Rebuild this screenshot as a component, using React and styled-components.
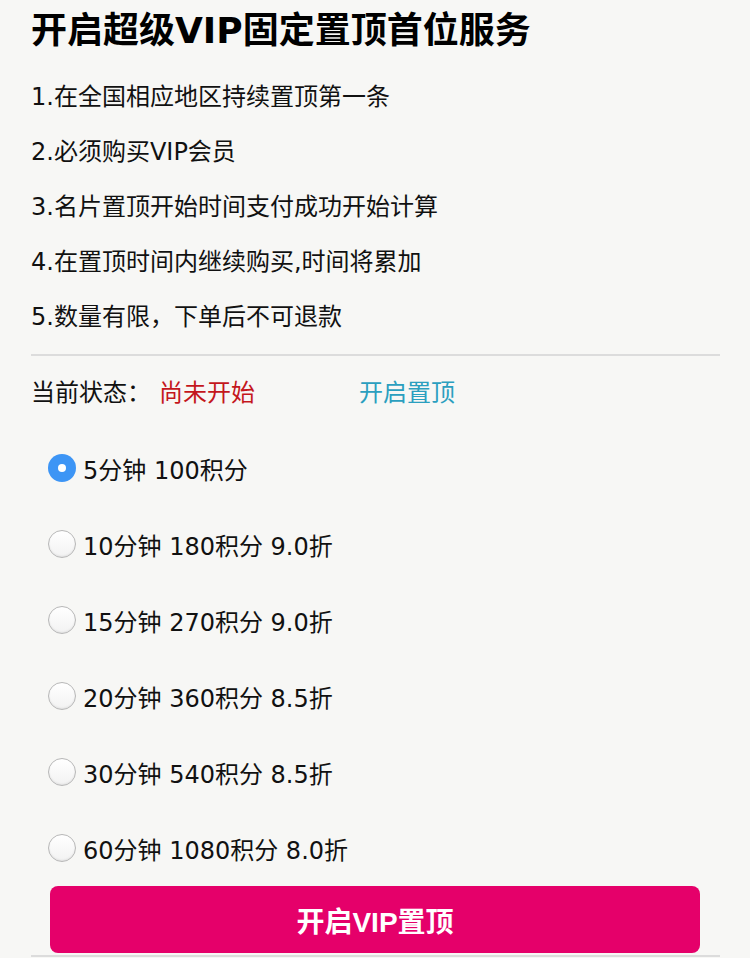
import React, { useState } from "react";
import styled, { createGlobalStyle } from "styled-components";

const GlobalStyle = createGlobalStyle`
  body {
    margin: 0;
    background: #f7f7f5;
    font-family: "DejaVu Sans", "Noto Sans CJK SC", sans-serif;
    color: #111;
  }
`;

const Page = styled.div`
  width: 750px;
  padding: 0 30px 0 31px;
  box-sizing: border-box;
`;

const Title = styled.h1`
  margin: 0;
  font-size: 36px;
  line-height: 62px;
  font-weight: bold;
  color: #000;
  white-space: nowrap;
`;

const Rules = styled.div`
  padding-top: 5px;
`;

const Rule = styled.div`
  height: 55px;
  display: flex;
  align-items: center;
  font-size: 24px;
`;

const Divider = styled.div`
  height: 2px;
  background: #dcdcdc;
  margin-top: 12px;
`;

const StatusRow = styled.div`
  height: 68px;
  display: flex;
  align-items: center;
  font-size: 24px;
`;

const Label = styled.span`
  width: 128px;
`;

const State = styled.span`
  width: 200px;
  color: #c4161c;
`;

const Action = styled.span`
  color: #2b9fbf;
  cursor: pointer;
`;

const Options = styled.div`
  padding-top: 6px;
`;

const Option = styled.label`
  height: 76px;
  display: flex;
  align-items: center;
  padding-left: 17px;
  font-size: 24px;
  cursor: pointer;
`;

const Radio = styled.span`
  width: 28px;
  height: 28px;
  border-radius: 50%;
  box-sizing: border-box;
  margin-right: 7px;
  display: flex;
  align-items: center;
  justify-content: center;
  background: ${(p) => (p.checked ? "#3d95f5" : "linear-gradient(#fff, #f2f2f2)")};
  border: ${(p) => (p.checked ? "none" : "1px solid #b8b8b8")};
  box-shadow: ${(p) => (p.checked ? "none" : "inset 0 -1px 2px rgba(0,0,0,0.08)")};

  &::after {
    content: "";
    display: ${(p) => (p.checked ? "block" : "none")};
    width: 8px;
    height: 8px;
    border-radius: 50%;
    background: #fff;
  }
`;

const Footer = styled.div`
  border-bottom: 2px solid #dcdcdc;
  padding-bottom: 2px;
`;

const Button = styled.button`
  display: block;
  margin-left: 19px;
  width: 650px;
  height: 67px;
  border: none;
  border-radius: 8px;
  background: #e5006a;
  color: #fff;
  font-family: "Liberation Sans", "Noto Sans CJK SC", sans-serif;
  font-size: 28px;
  font-weight: bold;
  cursor: pointer;
`;

const rules = [
  "1.在全国相应地区持续置顶第一条",
  "2.必须购买VIP会员",
  "3.名片置顶开始时间支付成功开始计算",
  "4.在置顶时间内继续购买,时间将累加",
  "5.数量有限，下单后不可退款",
];

const plans = [
  "5分钟 100积分",
  "10分钟 180积分 9.0折",
  "15分钟 270积分 9.0折",
  "20分钟 360积分 8.5折",
  "30分钟 540积分 8.5折",
  "60分钟 1080积分 8.0折",
];

export default function App() {
  const [selected, setSelected] = useState(0);

  return (
    <Page>
      <GlobalStyle />
      <Title>开启超级VIP固定置顶首位服务</Title>
      <Rules>
        {rules.map((r) => (
          <Rule key={r}>{r}</Rule>
        ))}
      </Rules>
      <Divider />
      <StatusRow>
        <Label>当前状态：</Label>
        <State>尚未开始</State>
        <Action>开启置顶</Action>
      </StatusRow>
      <Options>
        {plans.map((p, i) => (
          <Option key={p} onClick={() => setSelected(i)}>
            <Radio checked={selected === i} />
            {p}
          </Option>
        ))}
      </Options>
      <Footer>
        <Button>开启VIP置顶</Button>
      </Footer>
    </Page>
  );
}
